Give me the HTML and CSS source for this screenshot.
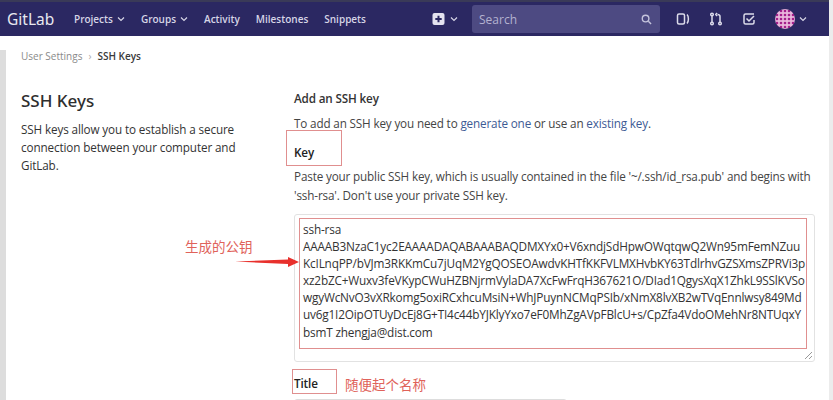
FILE: index.html
```html
<!DOCTYPE html>
<html lang="en">
<head>
<meta charset="utf-8">
<title>SSH Keys</title>
<link rel="stylesheet" href="styles.css">
</head>
<body>
<div class="page">
  <header class="nav">
    <span class="logo">GitLab</span>
    <nav class="links">
      <span class="link">Projects <svg class="chev" viewBox="0 0 8 6"><path d="M1 1.5l3 3 3-3"/></svg></span>
      <span class="link">Groups <svg class="chev" viewBox="0 0 8 6"><path d="M1 1.5l3 3 3-3"/></svg></span>
      <span class="link">Activity</span>
      <span class="link">Milestones</span>
      <span class="link">Snippets</span>
    </nav>
    <div class="tools">
      <span class="plus">
        <svg class="plus-i" viewBox="0 0 12 12"><rect width="12" height="12" rx="2" fill="#e4e3f0"/><path d="M6 2.8v6.4M2.8 6h6.4" stroke="#2b2862" stroke-width="2"/></svg>
        <svg class="chev" viewBox="0 0 8 6"><path d="M1 1.5l3 3 3-3"/></svg>
      </span>
      <div class="search">
        <span>Search</span>
        <svg class="mag" viewBox="0 0 12 12"><circle cx="5" cy="5" r="3.6"/><path d="M8 8l3 3"/></svg>
      </div>
      <svg class="ti" viewBox="0 0 14 14"><rect x="1.5" y="2" width="7" height="10" rx="1.5"/><path d="M11 2.5c1.2 1 1.4 2.5 1.4 4.5s-.4 3.5-1.4 4.5"/></svg>
      <svg class="ti" viewBox="0 0 14 14"><circle cx="3" cy="11.5" r="1.3"/><circle cx="11" cy="11.5" r="1.3"/><circle cx="3" cy="2.5" r="1.3"/><path d="M3 3.8v6.4M11 10.2V4.5C11 3 10 2.5 8.5 2.5M8 1L6.8 2.5 8 4"/></svg>
      <svg class="ti" viewBox="0 0 14 14"><path d="M12 2H3.5A1.5 1.5 0 0 0 2 3.5v7A1.5 1.5 0 0 0 3.5 12h7a1.5 1.5 0 0 0 1.5-1.5V8M4.5 6.5L7 9l5-5"/></svg>
      <span class="user">
        <svg class="avatar" viewBox="0 0 20 20">
          <defs><pattern id="dots" width="4" height="4" patternUnits="userSpaceOnUse"><rect width="4" height="4" fill="#e9b6dc"/><circle cx="2" cy="2" r="1.3" fill="#a51f8c"/></pattern></defs>
          <circle cx="10" cy="10" r="10" fill="url(#dots)"/>
        </svg>
        <svg class="chev" viewBox="0 0 8 6"><path d="M1 1.5l3 3 3-3"/></svg>
      </span>
    </div>
  </header>

  <div class="crumbs"><span class="crumb-a">User Settings</span><span class="crumb-sep">›</span><span class="crumb-b">SSH Keys</span></div>

  <main class="content">
    <aside class="intro">
      <h1>SSH Keys</h1>
      <p>SSH keys allow you to establish a secure connection between your computer and GitLab.</p>
    </aside>
    <section class="form">
      <h2>Add an SSH key</h2>
      <p class="lead">To add an SSH key you need to <a>generate one</a> or use an <a>existing key</a>.</p>
      <label class="lbl lbl-key">Key<i class="mark mark-key"></i></label>
      <p class="help">Paste your public SSH key, which is usually contained in the file '~/.ssh/id_rsa.pub' and begins with 'ssh-rsa'. Don't use your private SSH key.</p>
      <div class="area">
        <div class="key-text">ssh-rsa<br>AAAAB3NzaC1yc2EAAAADAQABAAABAQDMXYx0+V6xndjSdHpwOWqtqwQ2Wn95mFemNZuu<br>KcILnqPP/bVJm3RKKmCu7jUqM2YgQOSEOAwdvKHTfKKFVLMXHvbKY63TdlrhvGZSXmsZPRVi3p<br>xz2bZC+Wuxv3feVKypCWuHZBNjrmVylaDA7XcFwFrqH367621O/DIad1QgysXqX1ZhkL9SSlKVSo<br>wgyWcNvO3vXRkomg5oxiRCxhcuMsiN+WhJPuynNCMqPSIb/xNmX8lvXB2wTVqEnnlwsy849Md<br>uv6g1I2OipOTUyDcEj8G+TI4c44bYJKlyYxo7eF0MhZgAVpFBlcU+s/CpZfa4VdoOMehNr8NTUqxY<br>bsmT zhengja@dist.com</div>
        <svg class="grip" viewBox="0 0 10 10"><path d="M9 2L2 9M9 6L6 9"/></svg>
      </div>
      <label class="lbl lbl-title">Title<i class="mark mark-title"></i></label>
      <div class="title-input"></div>
    </section>
  </main>

  <span class="note note-a">生成的公钥</span>
  <svg class="arrow" viewBox="0 0 66 12"><path d="M0 5.5L53 3.5V1L64 6 53 11V8z"/></svg>
  <span class="note note-b">随便起个名称</span>
  <div class="bar-l"></div>
  <div class="bar-r"></div>
</div>
</body>
</html>
```
FILE: styles.css
```css
* { box-sizing: border-box; }
html, body { margin: 0; padding: 0; }
body { background: #fff; font-family: "Open Sans", "Noto Sans", sans-serif; color: #2e2e2e; overflow: hidden; }
.page { position: relative; width: 833px; height: 400px; overflow: hidden; }

.nav { height: 36px; background: #2b2862; border-top: 2px solid #3a3a58; display: flex; align-items: center; padding: 0 22px 0 7px; margin-right: 4px; color: #d6d5e6; }
.logo { font-size: 15.5px; color: #e8e8f0; width: 67px; font-family: "Noto Sans", sans-serif; }
.links { display: flex; gap: 16px; font-size: 10px; font-weight: 600; }
.link { display: flex; align-items: center; gap: 4px; white-space: nowrap; }
.chev { width: 8px; height: 6px; fill: none; stroke: #d6d5e6; stroke-width: 1.2; }
.tools { margin-left: auto; display: flex; align-items: center; }
.plus { display: flex; align-items: center; gap: 5px; margin-right: 14px; }
.plus-i { width: 13px; height: 12px; }
.search { width: 188px; height: 28px; background: #4d4a82; border-radius: 3px; display: flex; align-items: center; justify-content: space-between; padding: 0 8px 0 7px; font-size: 12px; color: #b4b2d0; margin-right: 16px; }
.mag { width: 11px; height: 11px; fill: none; stroke: #c5c4dc; stroke-width: 1.5; }
.ti { width: 14px; height: 14px; fill: none; stroke: #dcdbea; stroke-width: 1.5; margin-right: 19px; }
.user { display: flex; align-items: center; gap: 4px; }
.avatar { width: 20px; height: 20px; }

.crumbs { display: flex; align-items: center; height: 40px; padding-left: 21px; font-size: 10px; }
.crumb-a { color: #8a8a8a; }
.crumb-sep { color: #aaa; margin: 0 6px; }
.crumb-b { color: #3a3a3a; font-weight: 600; }

.content { display: flex; padding: 0 21px; }
.intro { width: 273px; flex: none; padding-top: 13px; padding-right: 16px; }
.intro h1 { margin: 0 0 8px; font-size: 17px; font-weight: 500; line-height: 23px; font-family: "Noto Sans", sans-serif; color: #2e2e2e; }
.intro p { margin: 0; font-size: 11.7px; letter-spacing: -.12px; line-height: 18px; color: #333; width: 225px; }
.form { flex: none; width: 521px; padding-top: 14px; font-size: 11.7px; letter-spacing: -.15px; }
.form h2 { margin: 0 0 7px; font-size: 11.7px; line-height: 17px; font-weight: 600; color: #333; }
.lead { margin: 0 0 11px; line-height: 18px; color: #444; white-space: nowrap; }
.lead a { color: #3d5a94; }
.lbl { display: block; font-weight: 600; line-height: 18px; color: #222; position: relative; }
.lbl-key { margin-bottom: 6px; }
.help { margin: 0 0 10px; line-height: 18.5px; color: #444; width: 522px; }
.area { position: relative; width: 521px; height: 148px; border: 1px solid #e2e2e2; border-radius: 3px; padding: 6px 8px; letter-spacing: 0; }
.key-text { font-size: 11.8px; letter-spacing: -.18px; line-height: 17.1px; color: #333; white-space: nowrap; }
.grip { position: absolute; right: 1px; bottom: 1px; width: 10px; height: 10px; fill: none; stroke: #999; stroke-width: 1; }
.lbl-title { margin-top: 12px; height: 18px; }
.title-input { margin-top: 7px; width: 273px; height: 12px; border: 1px solid #ddd; border-radius: 3px; }

.mark { position: absolute; border: 1px solid #e08f8f; display: block; }
.mark-key { left: -8px; top: -13px; width: 56px; height: 36px; }
.mark-title { left: -2px; top: -5px; width: 45px; height: 25px; }
.note { position: absolute; font-family: "Noto Sans CJK SC", serif; color: #e0625a; font-size: 13.5px; white-space: nowrap; }
.note-a { left: 185px; top: 236px; }
.note-b { left: 345px; top: 374px; }
.arrow { position: absolute; left: 235px; top: 256px; width: 66px; height: 12px; fill: #e8302c; }
.area::after { content: ""; position: absolute; left: 4px; top: 3px; right: 7px; bottom: 12px; border: 1px solid #e08f8f; pointer-events: none; }
.bar-l { position: absolute; left: 0; top: 50px; width: 6px; height: 350px; background: #ddd; }
.bar-r { position: absolute; right: 0; top: 0; width: 4px; height: 400px; background: #ececec; }
```
